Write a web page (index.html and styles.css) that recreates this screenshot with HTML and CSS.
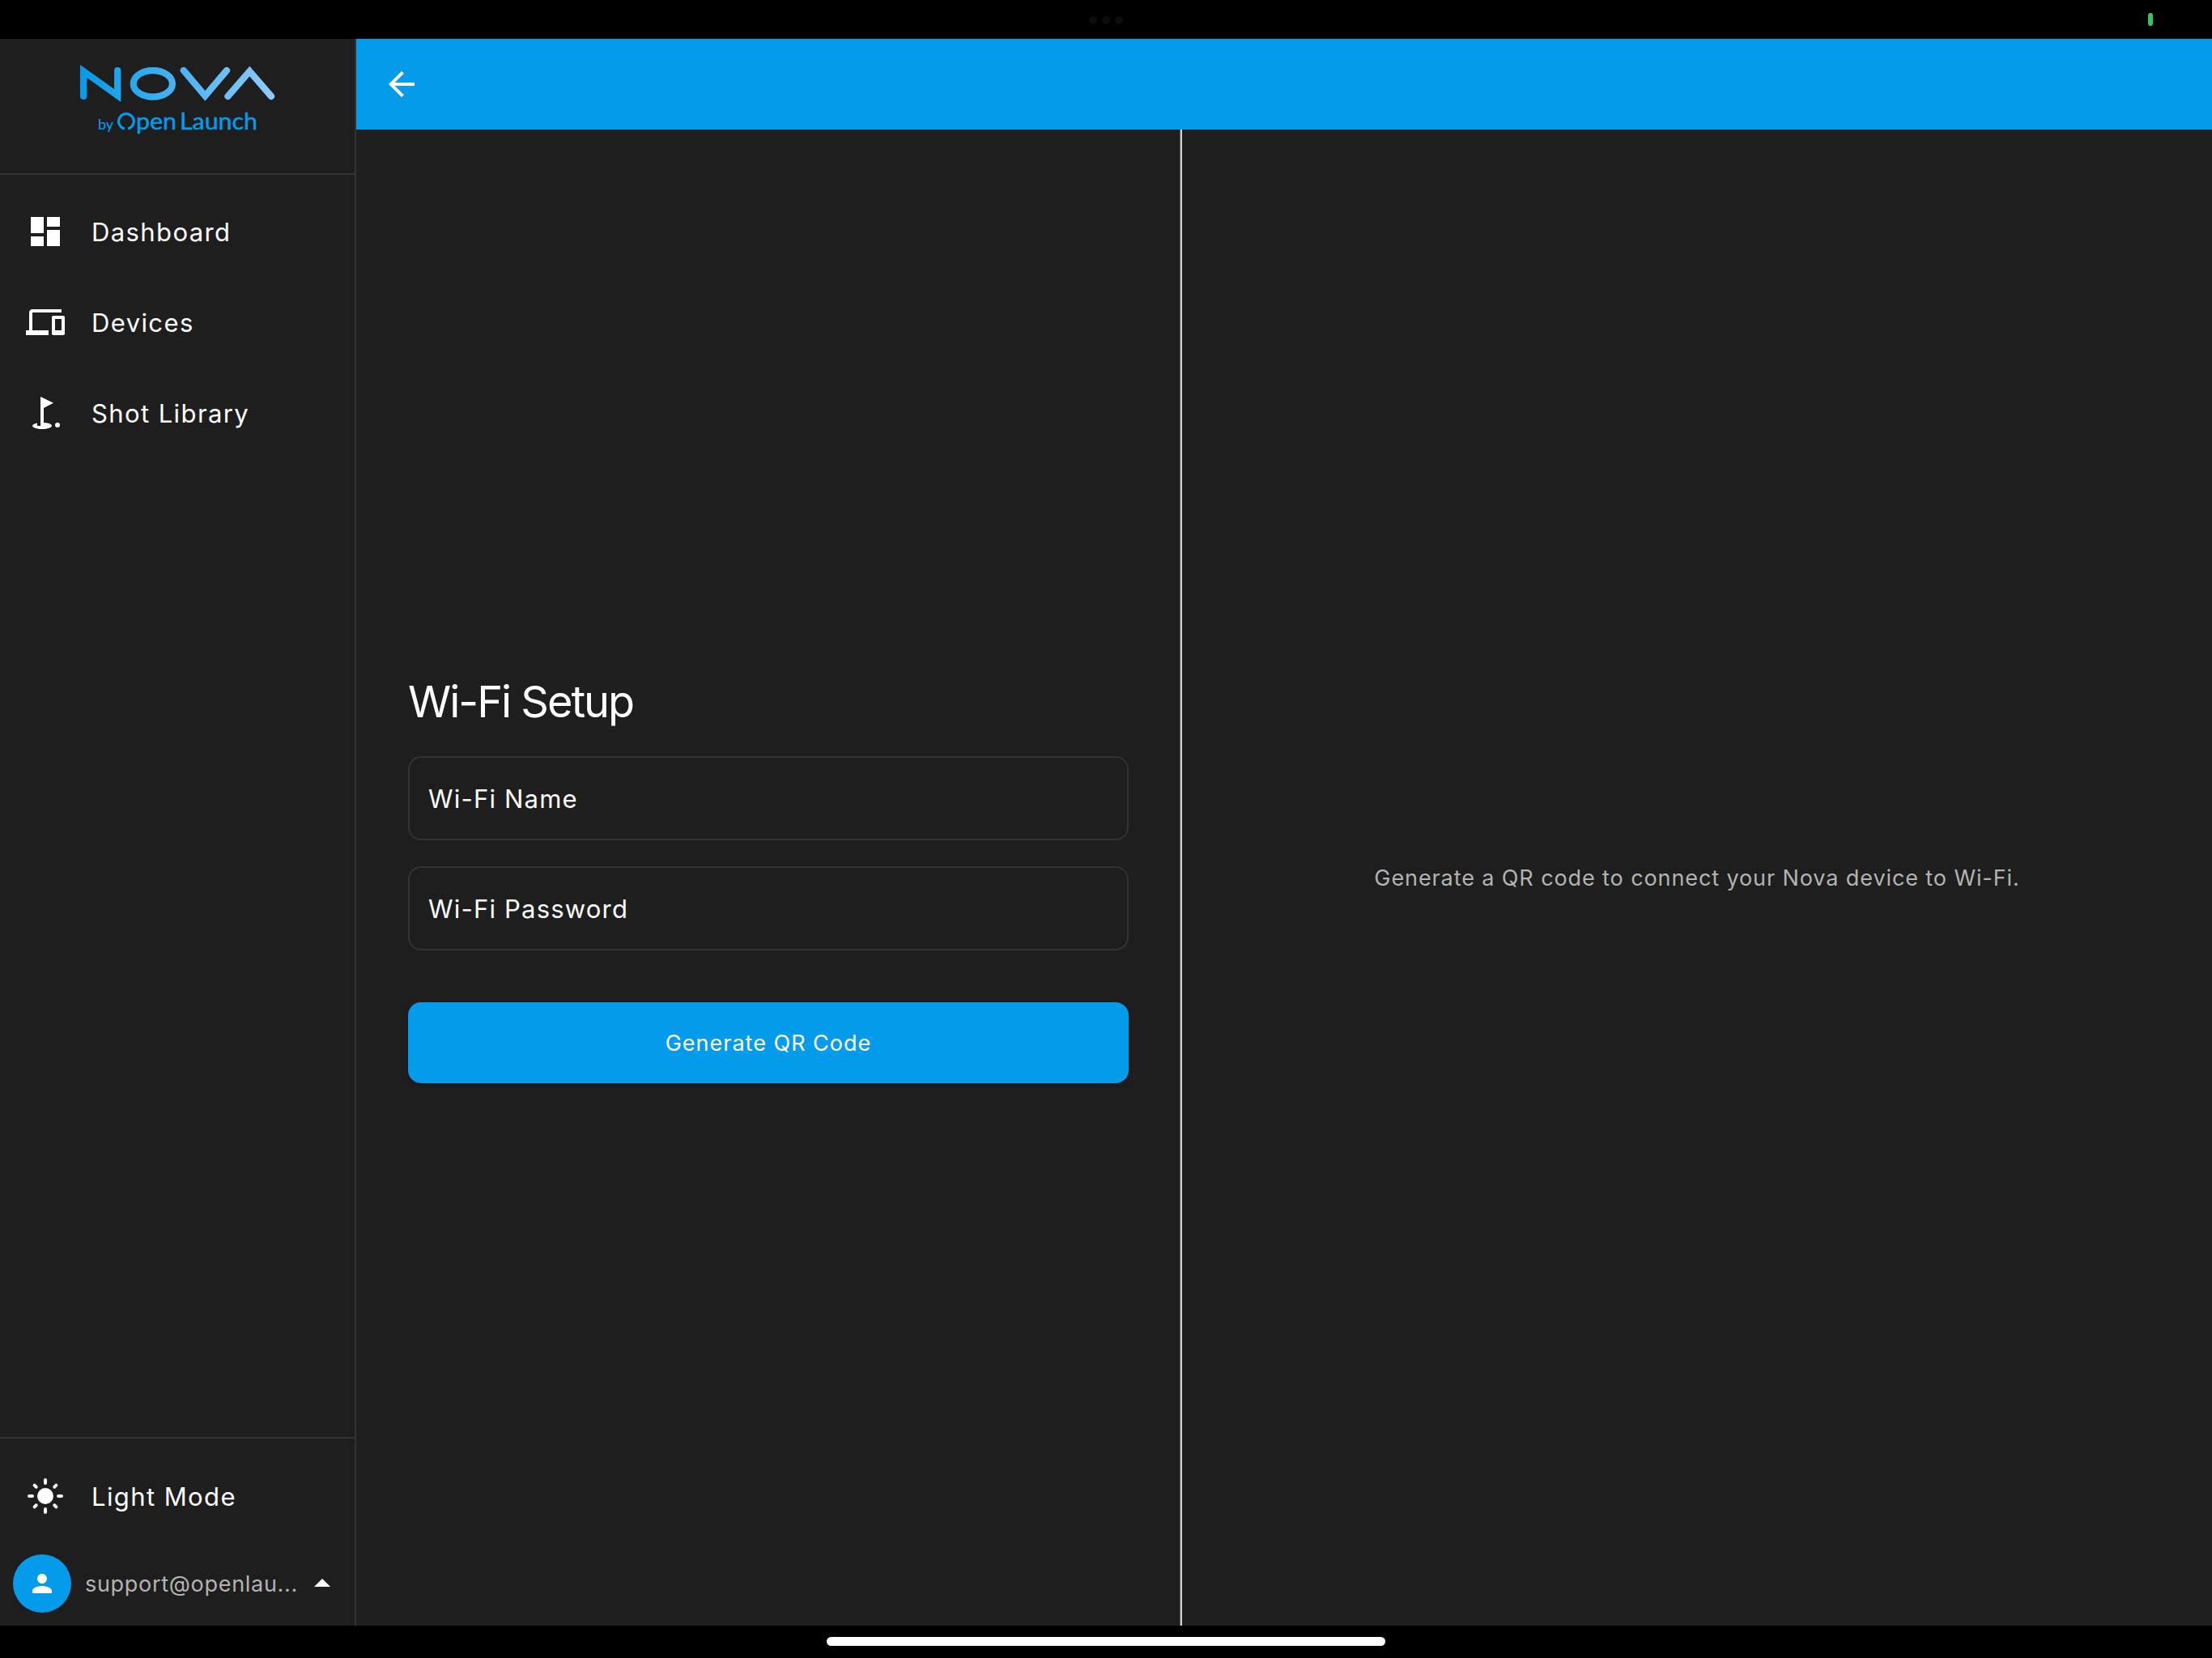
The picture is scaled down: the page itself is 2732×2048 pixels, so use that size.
FILE: index.html
```html
<!DOCTYPE html>
<html lang="en">

<head>
    <meta charset="utf-8">
    <meta name="viewport" content="width=device-width, initial-scale=1">
    <title>Wi-Fi Setup</title>
    <link rel="stylesheet" href="styles.css">
</head>

<body>
    <div class="status-bar">
        <div class="dots"><span></span><span></span><span></span></div>
        <span class="battery"></span>
    </div>

    <div class="app">
        <aside class="sidebar">
            <div class="brand">
                <svg class="logo" width="240" height="88" viewBox="0 0 240 88">
                    <defs>
                        <linearGradient id="nova" gradientUnits="userSpaceOnUse" x1="0" y1="0" x2="240" y2="0">
                            <stop offset="0" stop-color="#039BEA" />
                            <stop offset="1" stop-color="#90CAF9" />
                        </linearGradient>
                    </defs>
                    <!-- NOVA mark -->
                    <g fill="none" stroke="url(#nova)" stroke-width="8.2" stroke-linecap="round" stroke-miterlimit="10">
                        <path d="M4.1 39V8L46.200 38V7" />
                        <ellipse cx="89.800" cy="23.400" rx="24.100" ry="16.300" />
                        <path d="M127.800 7L154.300 38.400L181 7" />
                        <path d="M182.400 39L209.300 8L236 39" />
                    </g>
                    <!-- ring of the Open Launch mark -->
                    <path d="M54.900 79A9.300 9.300 0 1 1 58.900 79" fill="none" stroke="#039BEA" stroke-width="3.200" />
                    <text class="logo-by" x="22" y="80" textLength="19">by</text>
                    <text class="logo-text" x="69" y="80" textLength="50" lengthAdjust="spacingAndGlyphs">pen</text>
                    <text class="logo-text" x="123" y="80" textLength="96" lengthAdjust="spacingAndGlyphs">Launch</text>
                </svg>
            </div>

            <nav class="menu">
                <a class="item">
                    <svg width="48" height="48" viewBox="0 0 24 24"><path d="M3 13h8V3H3v10zm0 8h8v-6H3v6zm10 0h8V11h-8v10zm0-18v6h8V3h-8z" /></svg>
                    <span>Dashboard</span>
                </a>
                <a class="item">
                    <svg width="48" height="48" viewBox="0 0 24 24"><path d="M4 6h18V4H4c-1.100 0-2 .9-2 2v11H0v3h14v-3H4V6zm19 2h-6c-.55 0-1 .45-1 1v10c0 .55.45 1 1 1h6c.55 0 1-.45 1-1V9c0-.55-.45-1-1-1zm-1 9h-4v-7h4v7z" /></svg>
                    <span>Devices</span>
                </a>
                <a class="item">
                    <svg width="48" height="48" viewBox="0 0 24 24"><circle cx="19.500" cy="19.500" r="1.500" /><path d="M17 5.920L9 2v18H7v-1.730c-1.790.35-3 .99-3 1.730 0 1.100 2.690 2 6 2s6-.9 6-2c0-.99-2.160-1.810-5-1.970V8.980l6-3.060z" /></svg>
                    <span>Shot Library</span>
                </a>
            </nav>

            <div class="sidebar-footer">
                <a class="item">
                    <svg width="48" height="48" viewBox="0 0 24 24">
                        <circle cx="12" cy="12" r="5" />
                        <path d="M12 2v2M12 20v2M2 12h2M20 12h2M5.300 5.300l1.060 1.060M17.640 17.640l1.060 1.060M5.300 18.700l1.060-1.060M17.640 6.360l1.060-1.060" fill="none" stroke="#fff" stroke-width="2" stroke-linecap="round" />
                    </svg>
                    <span>Light Mode</span>
                </a>
                <div class="account">
                    <div class="avatar">
                        <svg width="36" height="36" viewBox="0 0 24 24"><path d="M12 12c2.210 0 4-1.790 4-4s-1.790-4-4-4-4 1.790-4 4 1.790 4 4 4zm0 2c-2.670 0-8 1.340-8 4v2h16v-2c0-2.660-5.330-4-8-4z" /></svg>
                    </div>
                    <span class="email">support@openlau...</span>
                    <svg class="caret" width="20" height="10" viewBox="0 0 20 10"><path d="M0 10L10 0l10 10z" /></svg>
                </div>
            </div>
        </aside>

        <div class="page">
            <header class="app-bar">
                <svg width="48" height="48" viewBox="0 0 24 24"><path d="M20 11H7.830l5.590-5.590L12 4l-8 8 8 8 1.410-1.410L7.830 13H20v-2z" /></svg>
            </header>
            <main class="content">
                <form class="wifi-form">
                    <h1>Wi-Fi Setup</h1>
                    <input class="field" type="text" placeholder="Wi-Fi Name">
                    <input class="field" type="text" placeholder="Wi-Fi Password">
                    <button class="generate" type="button">Generate QR Code</button>
                </form>
                <section class="preview">
                    <p>Generate a QR code to connect your Nova device to Wi-Fi.</p>
                </section>
            </main>
        </div>
    </div>

    <div class="home-bar"><span></span></div>
</body>

</html>
```

FILE: styles.css
```css
* {
    box-sizing: border-box;
}

body {
    margin: 0;
    height: 100vh;
    display: flex;
    flex-direction: column;
    overflow: hidden;
    background-color: #000;
    color: #fff;
    font-family: Inter, sans-serif;
}

svg {
    display: block;
    flex-shrink: 0;
    fill: #fff;
}

.status-bar {
    display: grid;
    grid-template-columns: 1fr auto 1fr;
    align-items: center;
    height: 48px;
    padding-right: 73px;
    padding-left: 73px;
}

.dots {
    grid-column: 2;
    display: flex;
    gap: 6px;
    padding-top: 2px;
}

.dots span {
    width: 10px;
    height: 10px;
    border-radius: 50%;
    background-color: #0d0d0d;
}

.battery {
    justify-self: end;
    width: 6px;
    height: 16px;
    border-radius: 3px;
    background-color: #34c759;
}

.app {
    flex: 1;
    display: flex;
    min-height: 0;
    background-color: #1e1e1e;
}

.sidebar {
    display: flex;
    flex-direction: column;
    width: 440px;
    border-right: 2px solid #333;
}

.brand {
    display: flex;
    justify-content: center;
    height: 168px;
    padding-top: 32px;
    border-bottom: 2px solid #333;
}

.logo {
    overflow: visible;
}

.logo-by,
.logo-text {
    fill: #039bea;
    stroke: #039bea;
    stroke-linejoin: round;
    font-family: Lato, sans-serif;
}

.logo-by {
    stroke-width: 0.2px;
    font-size: 18px;
}

.logo-text {
    stroke-width: 0.5px;
    font-size: 28px;
}

.menu {
    flex: 1;
    padding-top: 14px;
}

.item {
    display: flex;
    align-items: center;
    gap: 33px;
    height: 112px;
    padding-left: 32px;
    font-size: 31px;
    letter-spacing: 1.4px;
}

.sidebar-footer {
    height: 233px;
    padding-top: 15px;
    border-top: 2px solid #333;
}

.account {
    display: flex;
    align-items: center;
    height: 104px;
    padding-left: 16px;
}

.avatar {
    display: flex;
    align-items: center;
    justify-content: center;
    width: 72px;
    height: 72px;
    border-radius: 50%;
    background-color: #039bea;
}

.email {
    width: 283px;
    padding-left: 17px;
    color: #b3b3b3;
    font-size: 27px;
    letter-spacing: 0.7px;
    white-space: nowrap;
}

.caret {
    margin-bottom: 2px;
    margin-left: 17px;
}

.page {
    flex: 1;
    display: flex;
    flex-direction: column;
}

.app-bar {
    display: flex;
    align-items: center;
    height: 112px;
    padding-left: 32px;
    background-color: #049bea;
}

.content {
    flex: 1;
    display: flex;
}

.wifi-form {
    display: flex;
    flex-direction: column;
    justify-content: center;
    width: 1020px;
    padding: 0 64px;
    border-right: 2px solid #d0d0d0;
    box-shadow: inset -1px 0 #666;
}

.wifi-form h1 {
    margin: 0 0 31px;
    padding-top: 1px;
    font-size: 54px;
    font-weight: 400;
    line-height: 72px;
    letter-spacing: -2px;
}

.field {
    height: 104px;
    margin-bottom: 32px;
    padding: 0 23px;
    border: 2px solid #333;
    border-radius: 16px;
    outline: none;
    background: none;
    color: #fff;
    font-family: inherit;
    font-size: 31px;
    letter-spacing: 1.2px;
}

.field::placeholder {
    color: #fff;
    opacity: 1;
}

.generate {
    height: 100px;
    margin-top: 32px;
    border: 0;
    border-radius: 16px;
    background-color: #049bea;
    box-shadow: 0 2px 4px rgba(0, 0, 0, 0.2);
    color: #fff;
    font-family: inherit;
    font-size: 27px;
    letter-spacing: 1px;
}

.preview {
    flex: 1;
    display: flex;
    align-items: center;
    justify-content: center;
}

.preview p {
    margin: 0;
    color: #b3b3b3;
    font-size: 27px;
    letter-spacing: 0.9px;
    white-space: nowrap;
}

.home-bar {
    display: flex;
    justify-content: center;
    height: 40px;
    padding-top: 14px;
}

.home-bar span {
    width: 690px;
    height: 11px;
    border-radius: 6px;
    background-color: #fff;
}
```
